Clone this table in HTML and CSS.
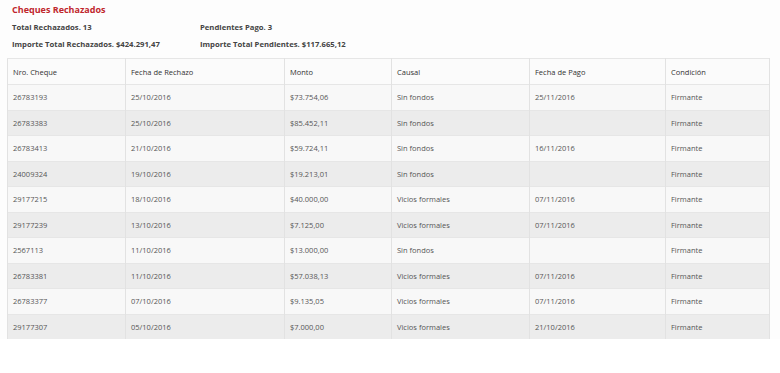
FILE: index.html
```html
<!DOCTYPE html>
<html lang="es">
<head>
<meta charset="utf-8">
<link rel="stylesheet" href="styles.css">
</head>
<body>
<div class="panel">
  <h1 class="title">Cheques Rechazados</h1>
  <div class="summary">
    <div class="summary-col">
      <p class="stat">Total Rechazados. 13</p>
      <p class="stat">Importe Total Rechazados. $424.291,47</p>
    </div>
    <div class="summary-col">
      <p class="stat">Pendientes Pago. 3</p>
      <p class="stat">Importe Total Pendientes. $117.665,12</p>
    </div>
  </div>
  <table class="grid">
    <colgroup>
      <col class="c1"><col class="c2"><col class="c3"><col class="c4"><col class="c5"><col class="c6">
    </colgroup>
    <thead>
      <tr><th>Nro. Cheque</th><th>Fecha de Rechazo</th><th>Monto</th><th>Causal</th><th>Fecha de Pago</th><th>Condición</th></tr>
    </thead>
    <tbody>
      <tr><td>26783193</td><td>25/10/2016</td><td>$73.754,06</td><td>Sin fondos</td><td>25/11/2016</td><td>Firmante</td></tr>
      <tr><td>26783383</td><td>25/10/2016</td><td>$85.452,11</td><td>Sin fondos</td><td></td><td>Firmante</td></tr>
      <tr><td>26783413</td><td>21/10/2016</td><td>$59.724,11</td><td>Sin fondos</td><td>16/11/2016</td><td>Firmante</td></tr>
      <tr><td>24009324</td><td>19/10/2016</td><td>$19.213,01</td><td>Sin fondos</td><td></td><td>Firmante</td></tr>
      <tr><td>29177215</td><td>18/10/2016</td><td>$40.000,00</td><td>Vicios formales</td><td>07/11/2016</td><td>Firmante</td></tr>
      <tr><td>29177239</td><td>13/10/2016</td><td>$7.125,00</td><td>Vicios formales</td><td>07/11/2016</td><td>Firmante</td></tr>
      <tr><td>2567113</td><td>11/10/2016</td><td>$13.000,00</td><td>Sin fondos</td><td></td><td>Firmante</td></tr>
      <tr><td>26783381</td><td>11/10/2016</td><td>$57.038,13</td><td>Vicios formales</td><td>07/11/2016</td><td>Firmante</td></tr>
      <tr><td>26783377</td><td>07/10/2016</td><td>$9.135,05</td><td>Vicios formales</td><td>07/11/2016</td><td>Firmante</td></tr>
      <tr><td>29177307</td><td>05/10/2016</td><td>$7.000,00</td><td>Vicios formales</td><td>21/10/2016</td><td>Firmante</td></tr>
    </tbody>
  </table>
</div>
</body>
</html>
```
FILE: styles.css
```css
html, body {
  margin: 0;
  padding: 0;
  background: #ffffff;
}
body {
  font-family: "Open Sans", "Noto Sans", sans-serif;
  color: #555;
}
.panel {
  padding: 3px 11px 0 7px;
  background: #fdfdfd;
}
.title {
  margin: 0 0 0 5px;
  font-size: 9px;
  line-height: 14px;
  font-weight: 700;
  color: #c0272d;
}
.summary {
  display: flex;
  padding-left: 5px;
  margin-top: 2px;
}
.summary-col:first-child {
  width: 188px;
}
.stat {
  margin: 0;
  font-size: 7.7px;
  line-height: 17px;
  font-weight: 700;
  color: #444;
}
.grid {
  margin-top: 5px;
  width: 762px;
  border-collapse: collapse;
  table-layout: fixed;
  font-size: 7.5px;
}
.c1 { width: 118px; }
.c2 { width: 159px; }
.c3 { width: 107px; }
.c4 { width: 138px; }
.c5 { width: 136px; }
.c6 { width: 104px; }
.grid th, .grid td {
  border: 1px solid #e2e2e2;
  border-top: 0;
  border-bottom: 0;
  padding: 0 5px;
  height: 24.5px;
  text-align: left;
  white-space: nowrap;
}
.grid th {
  font-weight: 400;
  color: #333;
  height: 25px;
  background: #fbfbfb;
  border-top: 1px solid #e6e6e6;
}
.grid tbody tr:nth-child(odd) td {
  background: #f8f8f8;
}
.grid tbody tr:nth-child(even) td {
  background: #ececec;
}
.grid tbody td {
  border-top: 1px solid #e6e6e6;
}
```
